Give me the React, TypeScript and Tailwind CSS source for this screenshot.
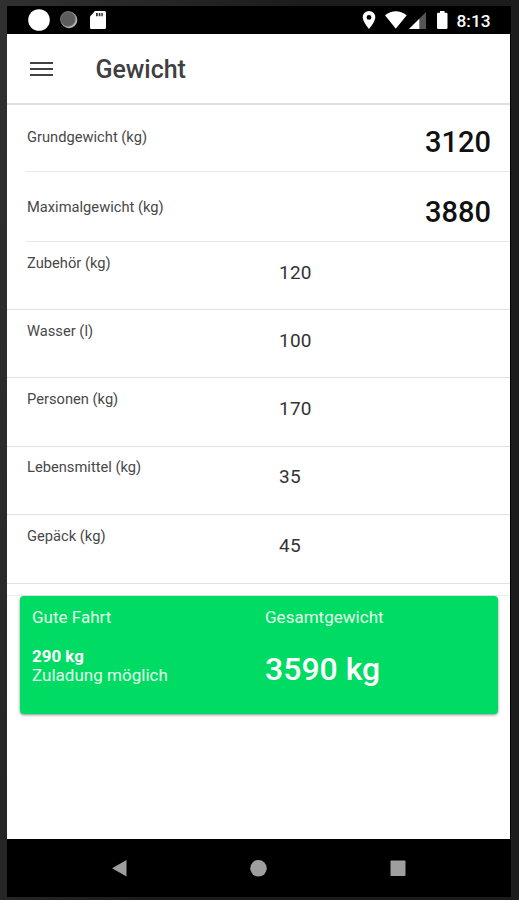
import React from "react";

type Row = { label: string; value: string; height: string };

const limits: Row[] = [
  { label: "Grundgewicht (kg)", value: "3120", height: "h-[67px]" },
  { label: "Maximalgewicht (kg)", value: "3880", height: "h-[70px]" },
];

const loads: Row[] = [
  { label: "Zubehör (kg)", value: "120", height: "h-[68px]" },
  { label: "Wasser (l)", value: "100", height: "h-[68px]" },
  { label: "Personen (kg)", value: "170", height: "h-[68.500px]" },
  { label: "Lebensmittel (kg)", value: "35", height: "h-[68.500px]" },
  { label: "Gepäck (kg)", value: "45", height: "h-[69px]" },
];

function StatusBar() {
  return (
    <div className="flex h-7 shrink-0 bg-black text-white">
      <svg className="h-7 w-[503px]" viewBox="7 6 503 28" aria-hidden="true">
        <circle cx="39" cy="20" r="10.8" fill="#fff" />
        <circle cx="69" cy="20" r="8.3" fill="#b4b4b4" />
        <circle cx="68" cy="19" r="7.5" fill="#5c5c5c" stroke="#808080" strokeWidth="0.8" />
        <path d="M95 11H104.500Q106 11 106 12.500V27.500Q106 29 104.500 29H91.500Q90 29 90 27.500V16.500Z" fill="#fff" />
        <path d="M96 13h1.800v3.200H96zm2.700 0h1.700v3.200h-1.700zm2.600 0h1.500v3.200h-1.500z" fill="#333" />
        <path fillRule="evenodd" d="M369 11a6.300 6.300 0 0 0-6.300 6.300C362.700 22 369 29 369 29s6.300-7 6.300-11.700A6.300 6.300 0 0 0 369 11Zm0 4a2.400 2.400 0 1 1 0 4.800 2.400 2.400 0 0 1 0-4.800Z" fill="#fff" />
        <path d="M385 15.200Q395.800 7.500 406.700 15.200L395.800 28.800Z" fill="#fff" />
        <path d="M426 12V29H409Z" fill="#555" />
        <path d="M419.300 18.700V29H409Z" fill="#fff" />
        <path d="M440 11h4.500v1.800H446.300q1.200 0 1.200 1.200V27.800q0 1.200-1.200 1.200H438.200q-1.200 0-1.200-1.200V14q0-1.200 1.200-1.200H440Z" fill="#fff" />
        <text x="456.500" y="26.500" fill="#fff" fontSize="17.300" fontWeight="500" fontFamily="Roboto, sans-serif">8:13</text>
      </svg>
    </div>
  );
}

export default function App() {
  return (
    <div className="h-[900px] w-[519px] overflow-hidden bg-[linear-gradient(100deg,#303030_0%,#1c1c1c_45%,#1c1c1c_100%)] pt-1.5 pl-[7px] font-[Roboto,sans-serif]">
      <div className="flex h-[891px] w-[504px] flex-col border-r border-black bg-white">
        <StatusBar />
        <header className="flex h-[71px] shrink-0 items-center border-b-2 border-[#dedede] pl-[23px]">
          <svg className="h-4 w-[23px]" viewBox="0 0 23 16" aria-hidden="true">
            <path d="M0 2H23M0 8H23M0 14H23" stroke="#424242" strokeWidth="2" />
          </svg>
          <h1 className="ml-[42.500px] pt-0.5 text-[25px] leading-8 font-medium tracking-[-0.05px] text-[#404040]">Gewicht</h1>
        </header>
        <main className="flex flex-1 flex-col">
          {limits.map((row) => (
            <div key={row.label} className={`${row.height} ml-[19px] flex shrink-0 items-end justify-between border-b border-[#e8e8e8] pr-[19px] pl-px`}>
              <span className="pb-[24px] text-[14.700px] leading-5 text-[#484848]">{row.label}</span>
              <span className="pb-[11px] text-[29px] leading-9 font-medium text-[#111]">{row.value}</span>
            </div>
          ))}
          {loads.map((row) => (
            <div key={row.label} className={`${row.height} flex shrink-0 border-b border-[#e2e2e2] pl-5`}>
              <span className="w-[252px] pt-[10.500px] text-[14.700px] leading-5 text-[#484848]">{row.label}</span>
              <span className="pt-[18.500px] text-[19px] leading-6 tracking-[0.2px] text-[#333]">{row.value}</span>
            </div>
          ))}
          <div className="h-3 shrink-0 border-b border-[#eee]" />
          <section className="ml-[13px] flex h-[118px] w-[478px] rounded bg-[#00db63] pl-3 text-white shadow-[0_1px_3px_rgba(0,0,0,0.45)]">
            <div className="w-[233px] pt-[9px] text-[17.050px] leading-[19px] text-[#e0ffe9]">
              <p className="leading-6">Gute Fahrt</p>
              <p className="mt-[18px] text-[16.900px] font-bold text-white">290 kg</p>
              <p>Zuladung möglich</p>
            </div>
            <div className="pt-[9px]">
              <p className="text-[17.050px] leading-6 text-[#e0ffe9]">Gesamtgewicht</p>
              <p className="mt-5 text-[32px] leading-10 font-medium">3590 kg</p>
            </div>
          </section>
        </main>
        <nav className="h-[58px] shrink-0 bg-black">
          <svg className="h-[58px] w-[503px]" viewBox="7 839 503 58" aria-hidden="true">
            <path d="M112 868.300L126.500 860V876.500Z" fill="#9e9e9e" />
            <circle cx="258.500" cy="868.300" r="8.300" fill="#9e9e9e" />
            <rect x="390.500" y="860.500" width="15" height="15.500" rx="0.800" fill="#9e9e9e" />
          </svg>
        </nav>
      </div>
    </div>
  );
}
